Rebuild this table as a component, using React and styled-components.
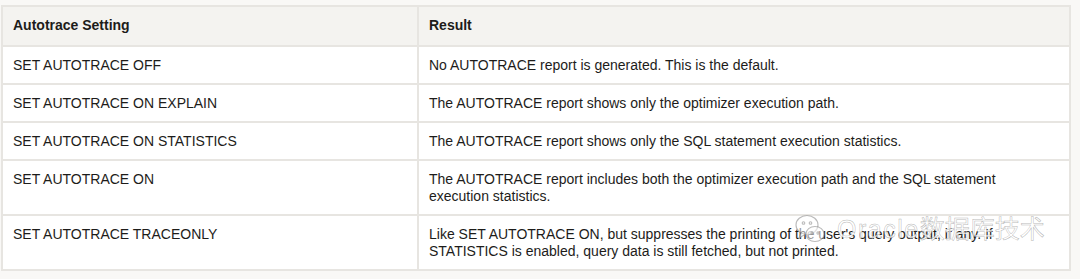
import React from 'react'
import styled, { createGlobalStyle } from 'styled-components'

const GlobalStyle = createGlobalStyle`
  body {
    margin: 0;
    background: #f9f8f6;
    font-family: "Liberation Sans", Arial, sans-serif;
  }
`

const Page = styled.div`
  position: relative;
  width: 1080px;
  height: 279px;
  padding: 5px 9px 0 1px;
  box-sizing: border-box;
`

const Table = styled.table`
  width: 100%;
  border-collapse: collapse;
  border: 2px solid #e7e5e1;
  background: #ffffff;
  font-size: 14px;
  line-height: 17px;
  color: #1d1c1a;
`

const HeadCell = styled.th`
  background: #f4f3f0;
  font-weight: bold;
  text-align: left;
  padding: 10px 10px 11px;
  border: 2px solid #e7e5e1;
  width: ${p => p.$width || 'auto'};
`

const Cell = styled.td`
  text-align: left;
  vertical-align: top;
  padding: 10px 10px 9px;
  border: 2px solid #e7e5e1;
`

const Watermark = styled.div`
  position: absolute;
  left: 793px;
  top: 211px;
  display: flex;
  align-items: center;
  gap: 10px;
  pointer-events: none;
`

const MarkText = styled.span`
  font-family: "Liberation Sans", "Noto Sans CJK SC", sans-serif;
  font-size: 25px;
  line-height: 36px;
  color: rgba(255, 255, 255, 0.8);
  -webkit-text-stroke: 0.5px rgba(140, 140, 140, 0.65);
`

const Latin = styled.span`
  letter-spacing: 1.5px;
`

const rows = [
  ['SET AUTOTRACE OFF', 'No AUTOTRACE report is generated. This is the default.'],
  ['SET AUTOTRACE ON EXPLAIN', 'The AUTOTRACE report shows only the optimizer execution path.'],
  ['SET AUTOTRACE ON STATISTICS', 'The AUTOTRACE report shows only the SQL statement execution statistics.'],
  ['SET AUTOTRACE ON', 'The AUTOTRACE report includes both the optimizer execution path and the SQL statement execution statistics.'],
  ['SET AUTOTRACE TRACEONLY', 'Like SET AUTOTRACE ON, but suppresses the printing of the user\'s query output, if any. If STATISTICS is enabled, query data is still fetched, but not printed.'],
]

const WeChatIcon = () => (
  <svg width="34" height="34" viewBox="0 0 34 34" fill="none" stroke="rgba(140,140,140,0.6)" strokeWidth="1.1">
    <ellipse cx="14" cy="13" rx="11" ry="9.5" fill="rgba(255,255,255,0.55)" />
    <path d="M8 21 L6 26 L12 22.5" fill="rgba(255,255,255,0.55)" />
    <circle cx="10.5" cy="11" r="1.3" />
    <circle cx="17.5" cy="11" r="1.3" />
    <ellipse cx="22" cy="22" rx="9" ry="7.5" fill="rgba(255,255,255,0.55)" />
    <circle cx="19" cy="21" r="1.1" />
    <circle cx="25" cy="21" r="1.1" />
  </svg>
)

const App = () => {
  return (
    <Page>
      <GlobalStyle />
      <Table>
        <thead>
          <tr>
            <HeadCell $width="394px">Autotrace Setting</HeadCell>
            <HeadCell>Result</HeadCell>
          </tr>
        </thead>
        <tbody>
          {rows.map(r => (
            <tr key={r[0]}>
              <Cell>{r[0]}</Cell>
              <Cell>{r[1]}</Cell>
            </tr>
          ))}
        </tbody>
      </Table>
      <Watermark>
        <WeChatIcon />
        <MarkText><Latin>Oracle</Latin>数据库技术</MarkText>
      </Watermark>
    </Page>
  )
}

export default App
